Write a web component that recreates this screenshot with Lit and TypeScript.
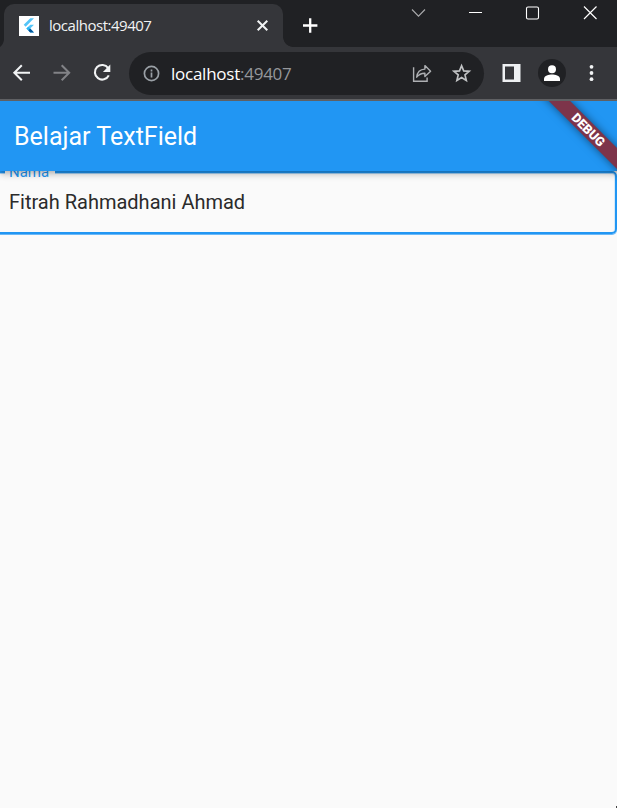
import { LitElement, html, css } from "lit";
import { customElement } from "lit/decorators.js";

@customElement("browser-tabs")
class BrowserTabs extends LitElement {
  static styles = css`
    :host { display: flex; height: 47px; background: #202124; font-family: "Open Sans", "Noto Sans", sans-serif; }
    svg { display: block; flex: none; }
    .edge { width: 4px; height: 47px; display: flex; align-items: flex-end; }
    .tab { position: relative; box-sizing: border-box; width: 279px; height: 43px; margin-top: 4px; padding: 0 13px 0 15px; border-radius: 10px 10px 0 0; background: #35363a; display: flex; align-items: center; }
    .tab::after { content: ""; position: absolute; left: 279px; bottom: 0; width: 10px; height: 10px; background: radial-gradient(circle at 100% 0, transparent 9.5px, #35363a 10.2px); }
    .title { flex: 1; margin: 0 0 2px 10px; font-size: 15px; letter-spacing: -0.48px; color: #f1f3f4; white-space: nowrap; }
    .plus { margin: 17px 0 0 19px; }
    .controls { margin-left: auto; display: flex; }
  `;
  render() {
    return html`
      <div class="edge"><svg width="4" height="7"><path d="M4 0V7H0Q3 5 4 0Z" fill="#35363a" /></svg></div>
      <div class="tab">
        <svg width="20" height="20" viewBox="0 0 20 20">
          <path fill="#fff" d="M0 0h20v20H0z" />
          <path fill="#54c5f8" d="M11.3 2.3H15L6.7 10.7 4.7 8.8zM11.3 8.7H15L11.2 12.6 15 16.4H11.3L7.4 12.6z" />
          <path fill="#29b6f6" d="M9.3 10.7l1.9 1.9-1.9 1.9-1.9-1.9z" />
          <path fill="#01579b" d="M9.3 14.5l1.9-1.9 3.8 3.8h-3.8z" />
        </svg>
        <span class="title">localhost:49407</span>
        <svg width="15" height="15" viewBox="0 0 15 15"><path d="M2.7 2.7l9.6 9.6M12.3 2.7l-9.6 9.6" stroke="#f1f3f4" stroke-width="2" /></svg>
      </div>
      <svg class="plus" width="16" height="17" viewBox="0 0 16 17"><path d="M8.2 1.3v14.4M1 8.5h14.4" stroke="#fff" stroke-width="2.3" /></svg>
      <div class="controls">
        <svg width="228" height="26" viewBox="0 0 228 26" fill="none">
          <path d="M23 9.5l6.5 6.7L36 9.5" stroke="#aaabad" stroke-width="1.1" />
          <path d="M80 12.5h13" stroke="#fff" />
          <rect x="137.5" y="7" width="12" height="12" rx="1.5" stroke="#fff" stroke-width="1.1" />
          <path d="M195 6.5l12.5 12.5M207.5 6.5L195 19" stroke="#fff" stroke-width="1.15" />
        </svg>
      </div>
    `;
  }
}

@customElement("browser-toolbar")
class BrowserToolbar extends LitElement {
  static styles = css`
    :host { box-sizing: border-box; display: flex; align-items: center; height: 54px; padding: 0 14px 0 12px; background: #35363a; border-bottom: 2px solid #5f6063; font-family: "Open Sans", "Noto Sans", sans-serif; }
    svg { display: block; flex: none; }
    .nav { display: flex; gap: 20px; }
    .address { box-sizing: border-box; width: 355px; height: 43px; margin: 0 0 0 17px; padding: 0 12px 0 13px; border-radius: 22px; background: #202124; display: flex; align-items: center; }
    .url { flex: 1; margin-left: 10px; font-size: 17px; letter-spacing: -0.25px; color: #fff; white-space: nowrap; }
    .port { color: #95979b; }
    .star { margin-left: 20px; }
    .panel { margin-left: 18px; }
    .avatar { margin-left: 17px; }
    .menu { margin-left: 22px; }
  `;
  render() {
    return html`
      <div class="nav">
        <svg width="20" height="20" viewBox="0 0 20 20"><path d="M18 9.7H2.6M9.8 2.2L2.3 9.7l7.5 7.5" fill="none" stroke="#f1f3f4" stroke-width="2" /></svg>
        <svg width="20" height="20" viewBox="0 0 20 20"><path d="M1.5 9.7h15.4M9.7 2.2l7.5 7.5-7.5 7.5" fill="none" stroke="#828387" stroke-width="2" /></svg>
        <svg width="20" height="20" viewBox="0 0 20 20"><path d="M16.2 5.1A7.3 7.3 0 1 0 16.8 12.4" fill="none" stroke="#f1f3f4" stroke-width="2.1" /><path d="M18.3 1.6V9H10.9z" fill="#f1f3f4" /></svg>
      </div>
      <div class="address">
        <svg width="19" height="19" viewBox="0 0 19 19"><circle cx="9.5" cy="9.5" r="7.1" fill="none" stroke="#9aa0a6" stroke-width="1.7" /><path d="M9.5 8.6v4.8M9.5 5.6v1.8" stroke="#9aa0a6" stroke-width="1.7" /></svg>
        <span class="url">localhost<span class="port">:49407</span></span>
        <svg width="20" height="20" viewBox="0 0 20 20" fill="none" stroke="#aeb0b3" stroke-width="1.4"><path d="M1.6 4.2V18.3H15.1V14.6" /><path d="M4.7 14.2C5.2 9 8.2 6.3 12.9 6.1V2.6L18.6 8.2 12.9 13.6V10.2C9.2 10.1 6.8 11.4 4.7 14.2Z" stroke-linejoin="round" /></svg>
        <svg class="star" width="20" height="20" viewBox="0 0 20 20"><path d="M9.6 2.8L11.7 7.9 17.2 8.3 13 11.9 14.3 17.4 9.6 14.5 4.9 17.4 6.2 11.9 2 8.3 7.5 7.9z" fill="none" stroke="#c0c2c4" stroke-width="1.7" /></svg>
      </div>
      <svg class="panel" width="19" height="18" viewBox="0 0 19 18"><path fill="#eef0f2" fill-rule="evenodd" d="M.5 0h18v18H.5zM3 2.5v13h9v-13z" /></svg>
      <svg class="avatar" width="28" height="28" viewBox="0 0 28 28"><circle cx="14" cy="14" r="14" fill="#202124" /><circle cx="14" cy="10.2" r="4" fill="#fff" /><path d="M6 22v-2.2c0-3 5-4.2 8-4.2s8 1.2 8 4.2V22z" fill="#fff" /></svg>
      <svg class="menu" width="7" height="20" viewBox="0 0 7 20" fill="#f1f3f4"><circle cx="3.5" cy="3.8" r="1.9" /><circle cx="3.5" cy="10" r="1.9" /><circle cx="3.5" cy="16.2" r="1.9" /></svg>
    `;
  }
}

@customElement("app-root")
class AppRoot extends LitElement {
  static styles = css`
    :host { display: flex; flex-direction: column; height: 808px; overflow: hidden; background: #fafafa; font-family: Roboto, sans-serif; }
    .page { position: relative; flex: 1; overflow: hidden; display: flex; flex-direction: column; }
    .appbar { position: relative; z-index: 1; box-sizing: border-box; height: 70px; padding-left: 14px; background: #2196f3; display: flex; align-items: center; color: #fff; box-shadow: 0 2px 5px -1px rgba(0,0,0,.2), 0 5px 6px rgba(0,0,0,.1), 0 1px 11px rgba(0,0,0,.08); }
    .title { font-size: 25px; font-weight: 400; }
    .field { position: relative; box-sizing: border-box; height: 63px; margin-left: -6px; padding: 0 0 2px 15px; border: 2px solid #2196f3; border-radius: 5px; box-shadow: 0 1px #6ab8f7, inset 0 1px #a6d3f8, inset -1px 0 #d5eafa; display: flex; align-items: center; font-size: 20px; color: #2b2b2b; }
    .label { position: absolute; left: 9px; top: -11px; padding: 0 6px 0 4px; background: #fafafa; color: #2196f3; font-size: 15px; line-height: 20px; }
    .value { margin-left: -2px; white-space: nowrap; }
    .ribbon { position: absolute; z-index: 2; left: 488.2px; top: 21.2px; width: 200px; height: 15px; transform: rotate(45deg); background: #7d344a; box-shadow: 0 0 8px rgba(0,0,0,.5); color: #fff; font-size: 12.8px; line-height: 15.5px; font-weight: 900; text-align: center; text-indent: 1px; }
    .corner { position: absolute; right: 0; bottom: 0; width: 1px; height: 2px; background: #444; }
  `;
  render() {
    return html`
      <browser-tabs></browser-tabs>
      <browser-toolbar></browser-toolbar>
      <div class="page">
        <div class="appbar"><span class="title">Belajar TextField</span></div>
        <div class="field"><span class="label">Nama</span><span class="value">Fitrah Rahmadhani Ahmad</span></div>
        <div class="ribbon">DEBUG</div>
        <div class="corner"></div>
      </div>
    `;
  }
}
